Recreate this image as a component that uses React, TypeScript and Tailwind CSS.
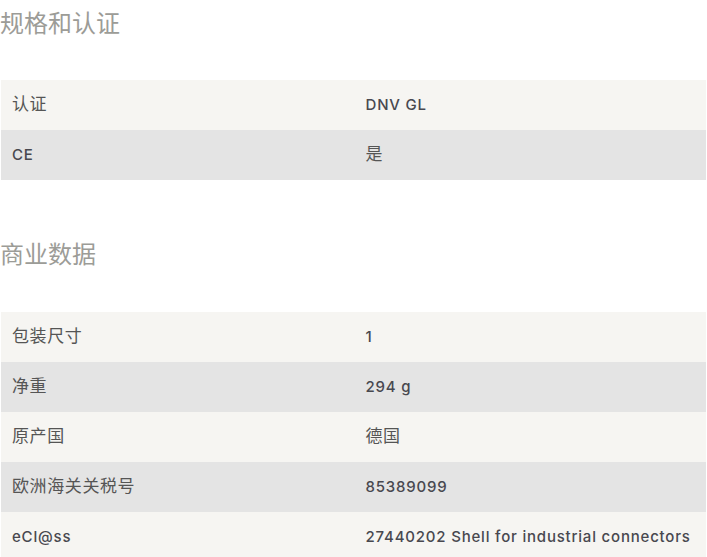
import React from "react";

type Row = { label: string; value: string; cjkLabel?: boolean; cjkValue?: boolean };

const spec: Row[] = [
  { label: "认证", value: "DNV GL", cjkLabel: true },
  { label: "CE", value: "是", cjkValue: true },
];

const commercial: Row[] = [
  { label: "包装尺寸", value: "1", cjkLabel: true },
  { label: "净重", value: "294 g", cjkLabel: true },
  { label: "原产国", value: "德国", cjkLabel: true, cjkValue: true },
  { label: "欧洲海关关税号", value: "85389099", cjkLabel: true },
  { label: "eCl@ss", value: "27440202 Shell for industrial connectors" },
];

const font = "font-['Inter','Noto_Sans_CJK_SC',sans-serif]";
const latin = "text-[15px] font-medium tracking-[0.8px] text-[#48484f]";
const cjk = "text-[17px] font-normal tracking-[0.6px] text-[#555555]";

function Table({ rows, last }: { rows: Row[]; last?: boolean }) {
  return (
    <div className={`mx-[1px] flex flex-col ${last ? "" : "mb-[57px]"}`}>
      {rows.map((r, i) => (
        <div
          key={r.label}
          className={`grid h-[50px] grid-cols-2 items-center ${
            i % 2 === 0 ? "bg-[#f6f5f2]" : "bg-[#e4e4e4]"
          }`}
        >
          <div className={`px-[11px] ${r.cjkLabel ? cjk : latin}`}>{r.label}</div>
          <div className={`px-[12px] ${r.cjkValue ? cjk : latin}`}>{r.value}</div>
        </div>
      ))}
    </div>
  );
}

export default function App() {
  return (
    <div className={`w-[707px] h-[557px] overflow-hidden bg-white ${font}`}>
      <h2 className="mt-[6px] mb-[38px] text-[24px] leading-[36px] text-[#9c9c97] font-normal">
        规格和认证
      </h2>
      <Table rows={spec} />
      <h2 className="mb-[39px] text-[24px] leading-[36px] text-[#9c9c97] font-normal">
        商业数据
      </h2>
      <Table rows={commercial} last />
    </div>
  );
}
